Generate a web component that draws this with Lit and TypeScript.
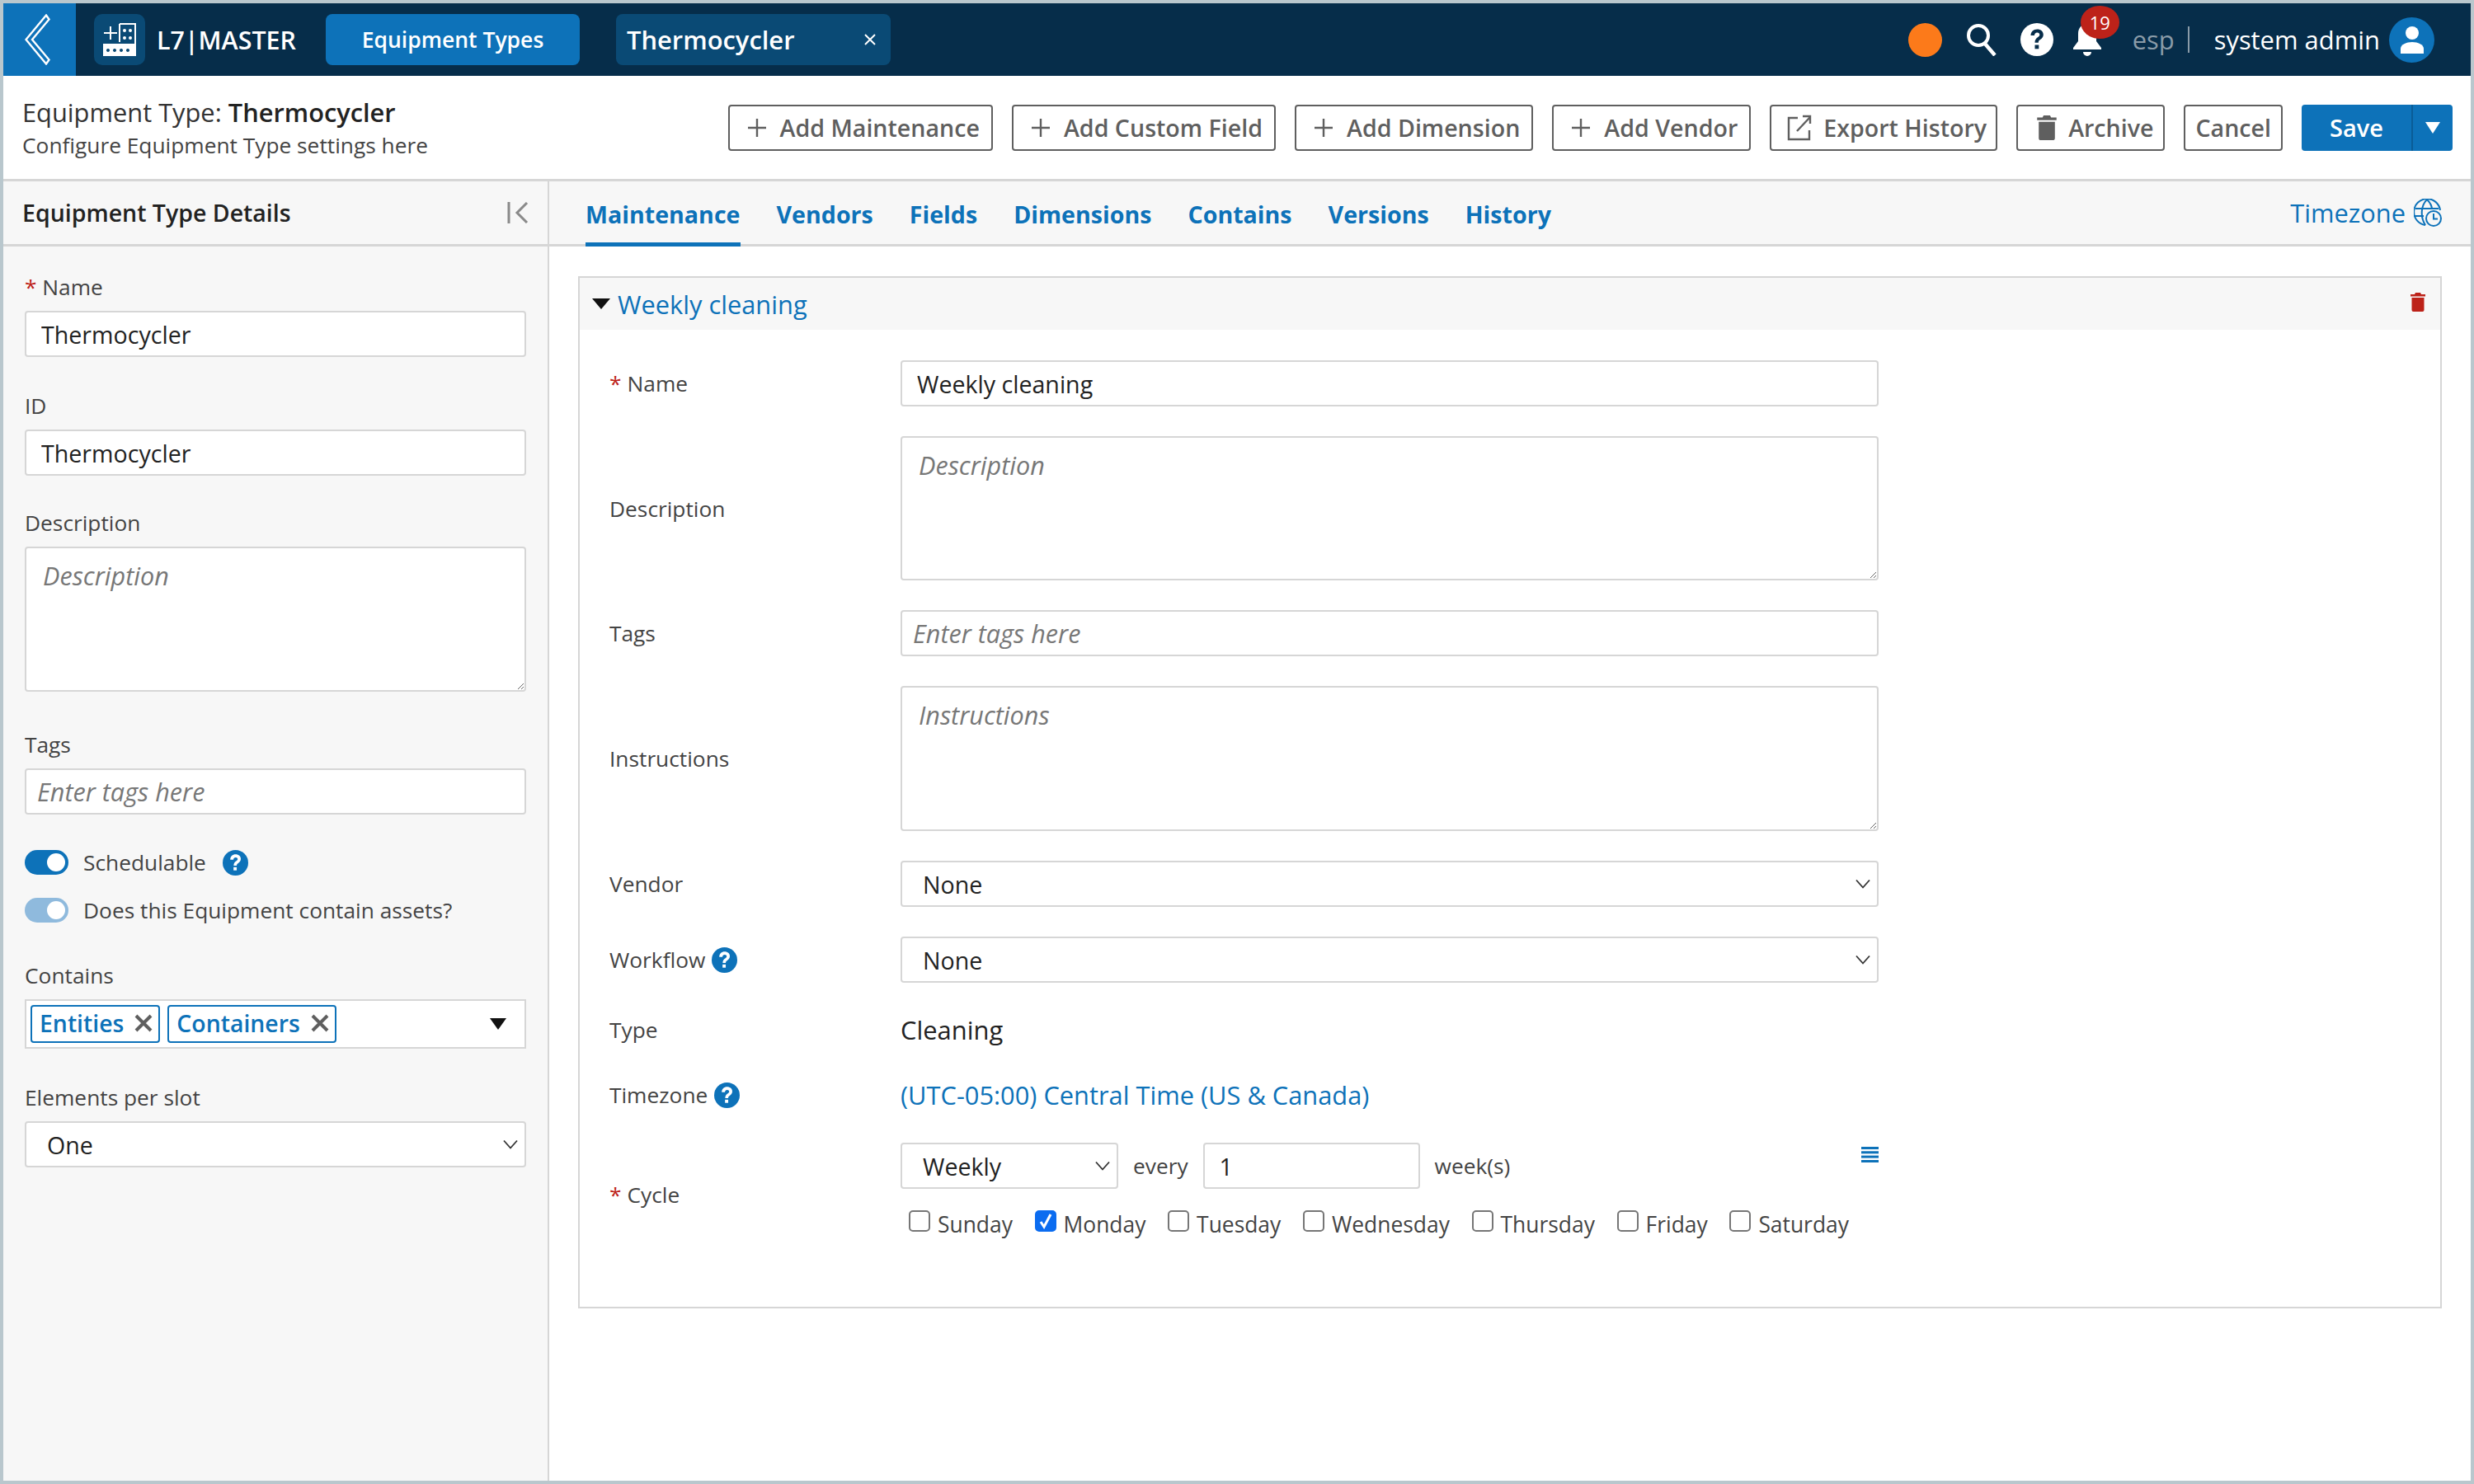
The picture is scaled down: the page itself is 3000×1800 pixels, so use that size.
import { LitElement, html, css, svg } from 'lit';
import { customElement } from 'lit/decorators.js';

const helpIcon = (size: number) => html`
  <svg class="help" width=${size} height=${size} viewBox="0 0 32 32">
    <circle cx="16" cy="16" r="16" fill="#0d72b9"></circle>
    <path d="M9.500 12c0-3.900 2.800-6.500 6.700-6.500 3.800 0 6.500 2.400 6.500 5.700 0 2.600-1.400 4-3.300 5.300-1.300.9-1.800 1.600-1.800 3h-3.800c0-2.700 1-4.200 3-5.600 1.300-.9 2-1.600 2-2.600 0-1.200-1-2.100-2.500-2.100-1.600 0-2.800 1-2.800 2.900z" fill="#fff"></path>
    <rect x="13.600" y="21.500" width="4" height="4" fill="#fff"></rect>
  </svg>
`;

const trashPath = svg`<path d="M6 0h6l1 2h5v2.400H0V2h5zM1.500 6h15v15a2 2 0 0 1-2 2h-11a2 2 0 0 1-2-2z"></path>`;

const chevron = html`
  <svg class="chev" width="20" height="12" viewBox="0 0 20 12">
    <path d="M2 1.500l8 9 8-9" fill="none" stroke="#333" stroke-width="1.800"></path>
  </svg>
`;

const plus = html`
  <svg width="24" height="24" viewBox="0 0 24 24">
    <path d="M12 1v22M1 12h22" stroke="#5f5f5f" stroke-width="2.400" fill="none"></path>
  </svg>
`;

@customElement('app-root')
export class AppRoot extends LitElement {
  static styles = css`
    :host {
      display: block;
      width: 3000px;
      height: 1800px;
      box-sizing: border-box;
      border: 4px solid #b9c7cd;
      background: #fff;
      font-family: 'Open Sans', sans-serif;
      color: #444;
      overflow: hidden;
    }
    * {
      box-sizing: border-box;
    }
    .page {
      display: flex;
      flex-direction: column;
      height: 100%;
    }

    /* top bar */
    .topbar {
      display: flex;
      align-items: center;
      height: 88px;
      flex: none;
      background: #062d4a;
      color: #fff;
    }
    .back {
      width: 88px;
      height: 88px;
      background: #0d72b9;
      display: flex;
      align-items: center;
      justify-content: center;
      padding-right: 5px;
    }
    .logo {
      display: flex;
      align-items: center;
      justify-content: center;
      width: 62px;
      height: 62px;
      margin-left: 22px;
      border-radius: 10px;
      background: #0a4a75;
    }
    .brand {
      margin-left: 14px;
      font-size: 30.400px;
      font-weight: 600;
      width: 205px;
      white-space: nowrap;
    }
    .nav-btn {
      display: flex;
      align-items: center;
      justify-content: center;
      width: 308px;
      height: 62px;
      border-radius: 8px;
      background: #0d72b9;
      font-size: 26.500px;
      font-weight: 600;
    }
    .nav-tab {
      display: flex;
      align-items: center;
      justify-content: space-between;
      width: 333px;
      height: 62px;
      margin-left: 44px;
      padding: 0 17px 0 13px;
      border-radius: 8px;
      background: #0a4a75;
      font-size: 30.900px;
      font-weight: 600;
    }
    .top-right {
      margin-left: auto;
      display: flex;
      align-items: center;
      padding-right: 44px;
    }
    .dot {
      width: 41px;
      height: 41px;
      border-radius: 50%;
      background: #fc7a1a;
    }
    .search {
      margin-left: 29px;
    }
    .q {
      margin-left: 28px;
    }
    .bell {
      position: relative;
      margin-left: 22px;
      width: 38px;
      height: 40px;
    }
    .badge {
      position: absolute;
      left: 11px;
      top: -21px;
      width: 47px;
      height: 40px;
      border-radius: 50%;
      background: #bd2219;
      font-size: 22px;
      display: flex;
      align-items: center;
      justify-content: center;
    }
    .esp {
      margin-left: 36px;
      font-size: 30.900px;
      color: #8a9ba8;
    }
    .sep {
      width: 2px;
      height: 32px;
      margin: 0 30px 0 16px;
      background: #8a9ba8;
    }
    .user {
      font-size: 30.900px;
    }
    .avatar {
      margin-left: 11px;
      width: 55px;
      height: 55px;
      border-radius: 50%;
      background: #0d72b9;
      display: flex;
      align-items: center;
      justify-content: center;
    }

    /* title row */
    .subhead {
      display: flex;
      align-items: center;
      height: 128px;
      flex: none;
      padding: 0 22px 0 23px;
      border-bottom: 3px solid #d6d6d6;
    }
    .title {
      font-size: 30.800px;
      line-height: 40px;
      margin-bottom: 2px;
      color: #333;
    }
    .title b {
      font-weight: 600;
      color: #222;
    }
    .subtitle {
      font-size: 26.300px;
      line-height: 36px;
      color: #444;
    }
    .actions {
      margin-left: auto;
      display: flex;
      gap: 23px;
    }
    .btn {
      display: flex;
      align-items: center;
      gap: 16px;
      height: 56px;
      padding: 0 14px 0 21px;
      border: 2px solid #5f5f5f;
      border-radius: 4px;
      background: #fff;
      color: #5f5f5f;
      font-size: 28.600px;
      font-weight: 600;
      white-space: nowrap;
    }
    .btn.export {
      gap: 14px;
      padding: 0 11px 0 19px;
    }
    .btn.archive {
      gap: 14px;
      padding: 0 12px 0 23px;
    }
    .btn.plain {
      padding: 0 12px;
    }
    .save {
      display: flex;
      height: 56px;
      width: 183px;
      border-radius: 4px;
      background: #0d72b9;
      color: #fff;
      font-size: 29px;
      font-weight: 600;
    }
    .save span {
      flex: 1;
      display: flex;
      align-items: center;
      justify-content: center;
    }
    .save i {
      width: 50px;
      border-left: 2px solid #0a5c97;
      display: flex;
      align-items: center;
      justify-content: center;
    }

    /* body columns */
    .columns {
      flex: 1;
      display: flex;
      min-height: 0;
    }
    .side {
      width: 662px;
      flex: none;
      background: #f7f7f7;
      border-right: 2px solid #d6d6d6;
    }
    .side-head {
      display: flex;
      align-items: center;
      justify-content: space-between;
      height: 79px;
      padding: 0 23px 0 23px;
      border-bottom: 3px solid #d6d6d6;
      font-size: 28.500px;
      font-weight: 600;
      color: #222;
    }
    .side-body {
      padding: 31px 26px 0 26px;
    }
    .group {
      margin-bottom: 41px;
    }
    .group.id {
      margin-bottom: 39px;
    }
    .group.desc {
      margin-bottom: 46px;
    }
    .group.tagged {
      margin-bottom: 43px;
    }
    .label {
      display: block;
      font-size: 26.300px;
      line-height: 36px;
      margin-bottom: 11px;
      color: #444;
    }
    .req {
      color: #bd2219;
    }
    .input {
      display: block;
      width: 100%;
      height: 56px;
      padding: 0 18px;
      border: 2px solid #d6d6d6;
      border-radius: 4px;
      background: #fff;
      font-family: inherit;
      font-size: 28.600px;
      color: #222;
      outline: none;
    }
    .input::placeholder {
      color: #777;
      font-style: italic;
      font-size: 30.600px;
      opacity: 1;
    }
    .input.tags {
      padding: 0 13px;
    }
    textarea.input {
      height: 176px;
      padding: 15px 20px;
      line-height: 36px;
      resize: both;
    }
    .row textarea.input.short {
      height: 175px;
    }
    .select-wrap {
      position: relative;
    }
    .select-wrap .chev {
      position: absolute;
      right: 9px;
      top: 22px;
      pointer-events: none;
    }
    select.input {
      appearance: none;
      padding: 0 25px;
    }
    .switch-row {
      display: flex;
      align-items: center;
      height: 30px;
      margin-bottom: 28px;
      font-size: 26.300px;
    }
    .switch-row.last {
      margin-bottom: 46px;
    }
    .switch {
      position: relative;
      width: 53px;
      height: 30px;
      margin-right: 18px;
      border-radius: 15px;
      background: #0d72b9;
    }
    .switch::after {
      content: '';
      position: absolute;
      right: 4px;
      top: 4px;
      width: 22px;
      height: 22px;
      border-radius: 50%;
      background: #fff;
    }
    .switch.muted {
      background: #8fbadd;
    }
    .switch-row .help {
      margin-left: 20px;
    }
    .multi {
      display: flex;
      align-items: center;
      gap: 9px;
      height: 60px;
      padding: 0 22px 0 5px;
      border: 2px solid #d6d6d6;
      background: #fff;
    }
    .chip {
      display: flex;
      align-items: center;
      gap: 13px;
      height: 46px;
      padding: 0 7px 3px 9px;
      border: 2px solid #0d72b9;
      border-radius: 4px;
      color: #0d72b9;
      font-size: 28.400px;
      font-weight: 600;
    }
    .multi .caret {
      margin-left: auto;
    }

    /* right area */
    .main {
      flex: 1;
      min-width: 0;
    }
    .tabs {
      display: flex;
      align-items: stretch;
      height: 79px;
      padding: 0 35px 0 22px;
      background: #f7f7f7;
      border-bottom: 3px solid #d6d6d6;
    }
    .tab {
      display: flex;
      align-items: center;
      margin: 0 22px;
      margin-bottom: -3px;
      font-size: 28.600px;
      font-weight: 700;
      color: #0d72b9;
    }
    .tab.active {
      box-shadow: inset 0 -5px 0 #0d72b9;
    }
    .tz {
      margin-left: auto;
      display: flex;
      align-items: center;
      gap: 10px;
      font-size: 30.800px;
      color: #0d72b9;
    }
    .card {
      margin: 36px 35px 0;
      height: 1252px;
      border: 2px solid #d6d6d6;
    }
    .card-head {
      display: flex;
      align-items: center;
      height: 63px;
      padding: 0 18px 0 15px;
      background: #f7f7f7;
      color: #0d72b9;
      font-size: 30.800px;
    }
    .card-head .tri {
      margin-right: 9px;
    }
    .card-head .del {
      margin-left: auto;
      margin-top: -5px;
    }
    .form {
      display: flex;
      flex-direction: column;
      gap: 36px;
      padding: 37px 0 0 36px;
    }
    .row {
      display: grid;
      grid-template-columns: 353px 1186px;
      align-items: center;
    }
    .row.spaced {
      margin-bottom: 1px;
    }
    .row.cycle {
      min-height: 126px;
    }
    .row-label {
      display: flex;
      align-items: center;
      gap: 6px;
      font-size: 26.300px;
      color: #444;
    }
    .row-label .req {
      margin-right: 1px;
    }
    .row-label .help {
      margin-left: 2px;
    }
    .value {
      font-size: 30.900px;
      line-height: 42px;
      color: #222;
    }
    .link {
      font-size: 30.800px;
      line-height: 42px;
      color: #0d72b9;
    }
    .cycle-body {
      align-self: start;
    }
    .cycle-line {
      display: flex;
      align-items: center;
      gap: 18px;
      font-size: 26.300px;
    }
    .cycle-line .period {
      width: 264px;
    }
    .cycle-line .num {
      width: 263px;
    }
    .lines {
      margin-left: auto;
      align-self: flex-start;
      margin-top: 5px;
    }
    .days {
      display: flex;
      gap: 26.700px;
      margin: 25px 0 0 10px;
      font-size: 26.400px;
      line-height: 36px;
    }
    .day {
      display: flex;
      align-items: center;
      gap: 9px;
    }
    .box {
      display: flex;
      align-items: center;
      justify-content: center;
      width: 26px;
      height: 26px;
      margin-top: -9px;
      border: 2px solid #767676;
      border-radius: 5px;
      background: #fff;
    }
    .box.on {
      border-color: #0b6cf0;
      background: #0b6cf0;
    }
  `;

  private tabs = ['Maintenance', 'Vendors', 'Fields', 'Dimensions', 'Contains', 'Versions', 'History'];
  private days = ['Sunday', 'Monday', 'Tuesday', 'Wednesday', 'Thursday', 'Friday', 'Saturday'];

  renderTopbar() {
    return html`
      <div class="topbar">
        <div class="back">
          <svg width="31" height="62" viewBox="0 0 31 62">
            <path d="M26 1.500l3.500 5L9 31l20.500 24.500L26 60.500 1.500 31z" fill="none" stroke="#fff" stroke-width="2.400"></path>
          </svg>
        </div>
        <div class="logo">
          <svg width="40" height="40" viewBox="0 0 40 40" fill="#fff">
            <path d="M1 12h16M9 4v16" stroke="#fff" stroke-width="2" fill="none"></path>
            <path d="M20 1h19v38" stroke="#fff" stroke-width="2" fill="none"></path>
            <path d="M20 1v22" stroke="#fff" stroke-width="2" fill="none"></path>
            <circle cx="26" cy="9" r="2"></circle><circle cx="33" cy="9" r="2"></circle>
            <circle cx="26" cy="18" r="2"></circle><circle cx="33" cy="18" r="2"></circle>
            <path fill-rule="evenodd" d="M0 25h40v15H0zM6 31a2 2 0 1 0 .01 0zM14 31a2 2 0 1 0 .01 0zM22 31a2 2 0 1 0 .01 0zM30 31a2 2 0 1 0 .01 0z"></path>
          </svg>
        </div>
        <div class="brand">L7|MASTER</div>
        <div class="nav-btn">Equipment Types</div>
        <div class="nav-tab">
          <span>Thermocycler</span>
          <svg width="16" height="16" viewBox="0 0 16 16"><path d="M2 2l12 12M14 2L2 14" stroke="#fff" stroke-width="2"></path></svg>
        </div>
        <div class="top-right">
          <div class="dot"></div>
          <svg class="search" width="38" height="40" viewBox="0 0 38 40">
            <circle cx="15" cy="15" r="12" fill="none" stroke="#fff" stroke-width="4"></circle>
            <path d="M23 25l12 14" stroke="#fff" stroke-width="4.500"></path>
          </svg>
          <svg class="q" width="40" height="40" viewBox="0 0 40 40">
            <circle cx="20" cy="20" r="20" fill="#fff"></circle>
            <path d="M12.500 15c0-4.500 3.300-7.500 7.800-7.500 4.400 0 7.500 2.700 7.500 6.500 0 3-1.600 4.600-3.800 6.100-1.600 1.100-2.200 1.900-2.200 3.700h-4.300c0-3.200 1.100-4.900 3.400-6.500 1.600-1.100 2.400-1.900 2.400-3.100 0-1.500-1.200-2.600-3-2.600-1.900 0-3.300 1.200-3.300 3.400z" fill="#062d4a"></path>
            <rect x="17.500" y="26.500" width="4.800" height="4.800" fill="#062d4a"></rect>
          </svg>
          <div class="bell">
            <svg width="38" height="40" viewBox="0 0 38 40" fill="#fff">
              <path d="M19 1c7 0 11 5 11 12v9l6 8v2H2v-2l6-8v-9C8 6 12 1 19 1zM14 35h10a5 5 0 0 1-10 0z"></path>
            </svg>
            <div class="badge">19</div>
          </div>
          <span class="esp">esp</span>
          <span class="sep"></span>
          <span class="user">system admin</span>
          <div class="avatar">
            <svg width="30" height="34" viewBox="0 0 30 34" fill="#fff">
              <circle cx="15" cy="9" r="8"></circle>
              <path d="M1 34v-6c0-5 7-8 14-8s14 3 14 8v6z"></path>
            </svg>
          </div>
        </div>
      </div>
    `;
  }

  renderSubhead() {
    return html`
      <div class="subhead">
        <div>
          <div class="title">Equipment Type: <b>Thermocycler</b></div>
          <div class="subtitle">Configure Equipment Type settings here</div>
        </div>
        <div class="actions">
          <div class="btn">${plus}Add Maintenance</div>
          <div class="btn">${plus}Add Custom Field</div>
          <div class="btn">${plus}Add Dimension</div>
          <div class="btn">${plus}Add Vendor</div>
          <div class="btn export">
            <svg width="30" height="32" viewBox="0 0 30 32" fill="none" stroke="#5f5f5f" stroke-width="2.400">
              <path d="M13 4H2v26h25V19M12 20L28 3M19 2h9v9"></path>
            </svg>
            Export History
          </div>
          <div class="btn archive">
            <svg width="24" height="30" viewBox="0 0 18 23" fill="#5f5f5f">${trashPath}</svg>
            Archive
          </div>
          <div class="btn plain">Cancel</div>
          <div class="save">
            <span>Save</span>
            <i><svg width="18" height="14" viewBox="0 0 18 14"><path d="M0 0h18L9 14z" fill="#fff"></path></svg></i>
          </div>
        </div>
      </div>
    `;
  }

  renderChip(text: string) {
    return html`
      <div class="chip">
        ${text}
        <svg width="22" height="22" viewBox="0 0 22 22"><path d="M2 2l18 18M20 2L2 20" stroke="#5f5f5f" stroke-width="4"></path></svg>
      </div>
    `;
  }

  renderSide() {
    return html`
      <aside class="side">
        <div class="side-head">
          Equipment Type Details
          <svg width="26" height="26" viewBox="0 0 26 26" fill="none" stroke="#8a8a8a" stroke-width="3">
            <path d="M2 0v26M24 1L12 13l12 12"></path>
          </svg>
        </div>
        <div class="side-body">
          <div class="group">
            <label class="label"><span class="req">*</span> Name</label>
            <input class="input" .value=${'Thermocycler'} />
          </div>
          <div class="group id">
            <label class="label">ID</label>
            <input class="input" .value=${'Thermocycler'} />
          </div>
          <div class="group desc">
            <label class="label">Description</label>
            <textarea class="input" placeholder="Description"></textarea>
          </div>
          <div class="group tagged">
            <label class="label">Tags</label>
            <input class="input tags" placeholder="Enter tags here" />
          </div>
          <div class="switch-row">
            <span class="switch"></span>Schedulable${helpIcon(31)}
          </div>
          <div class="switch-row last">
            <span class="switch muted"></span>Does this Equipment contain assets?
          </div>
          <div class="group">
            <label class="label">Contains</label>
            <div class="multi">
              ${this.renderChip('Entities')}${this.renderChip('Containers')}
              <svg class="caret" width="20" height="14" viewBox="0 0 20 14"><path d="M0 0h20L10 14z" fill="#111"></path></svg>
            </div>
          </div>
          <div class="group">
            <label class="label">Elements per slot</label>
            <div class="select-wrap">
              <select class="input"><option>One</option></select>
              ${chevron}
            </div>
          </div>
        </div>
      </aside>
    `;
  }

  renderCycle() {
    return html`
      <div class="row cycle">
        <div class="row-label"><span class="req">*</span> Cycle</div>
        <div class="cycle-body">
          <div class="cycle-line">
            <div class="select-wrap period">
              <select class="input"><option>Weekly</option></select>
              ${chevron}
            </div>
            <span>every</span>
            <input class="input num" .value=${'1'} />
            <span>week(s)</span>
            <svg class="lines" width="21" height="19" viewBox="0 0 21 19" fill="#0d72b9">
              <rect width="21" height="3"></rect><rect y="5.300" width="21" height="3"></rect>
              <rect y="10.600" width="21" height="3"></rect><rect y="16" width="21" height="3"></rect>
            </svg>
          </div>
          <div class="days">
            ${this.days.map(
              (d) => html`
                <div class="day">
                  <span class="box ${d === 'Monday' ? 'on' : ''}">
                    ${d === 'Monday'
                      ? html`<svg width="16" height="20" viewBox="0 0 16 20"><path d="M2 11l4 6 8-15" fill="none" stroke="#fff" stroke-width="3"></path></svg>`
                      : ''}
                  </span>
                  ${d}
                </div>
              `,
            )}
          </div>
        </div>
      </div>
    `;
  }

  renderMain() {
    return html`
      <main class="main">
        <div class="tabs">
          ${this.tabs.map((t, i) => html`<div class="tab ${i === 0 ? 'active' : ''}">${t}</div>`)}
          <div class="tz">
            Timezone
            <svg width="34" height="34" viewBox="0 0 34 34" fill="none" stroke="#0d72b9" stroke-width="2">
              <path d="M14 32A16 16 0 1 1 32 14"></path>
              <path d="M2 12h28M1 21h11M16 1c-8 8-8 22-2 31M16 1c4 4 6 8 6 12"></path>
              <circle cx="24" cy="24" r="9"></circle>
              <path d="M24 18v6.500h5"></path>
            </svg>
          </div>
        </div>
        <section class="card">
          <div class="card-head">
            <svg class="tri" width="22" height="13" viewBox="0 0 22 13"><path d="M0 0h22L11 13z" fill="#111"></path></svg>
            Weekly cleaning
            <svg class="del" width="18" height="23" viewBox="0 0 18 23" fill="#bd2219">${trashPath}</svg>
          </div>
          <div class="form">
            <div class="row">
              <div class="row-label"><span class="req">*</span> Name</div>
              <input class="input" .value=${'Weekly cleaning'} />
            </div>
            <div class="row">
              <div class="row-label">Description</div>
              <textarea class="input short" placeholder="Description"></textarea>
            </div>
            <div class="row">
              <div class="row-label">Tags</div>
              <input class="input tags" placeholder="Enter tags here" />
            </div>
            <div class="row">
              <div class="row-label">Instructions</div>
              <textarea class="input" placeholder="Instructions"></textarea>
            </div>
            <div class="row">
              <div class="row-label">Vendor</div>
              <div class="select-wrap"><select class="input"><option>None</option></select>${chevron}</div>
            </div>
            <div class="row">
              <div class="row-label">Workflow ${helpIcon(31)}</div>
              <div class="select-wrap"><select class="input"><option>None</option></select>${chevron}</div>
            </div>
            <div class="row spaced">
              <div class="row-label">Type</div>
              <div class="value">Cleaning</div>
            </div>
            <div class="row spaced">
              <div class="row-label">Timezone ${helpIcon(31)}</div>
              <div class="link">(UTC-05:00) Central Time (US &amp; Canada)</div>
            </div>
            ${this.renderCycle()}
          </div>
        </section>
      </main>
    `;
  }

  render() {
    return html`
      <div class="page">
        ${this.renderTopbar()} ${this.renderSubhead()}
        <div class="columns">${this.renderSide()} ${this.renderMain()}</div>
      </div>
    `;
  }
}
